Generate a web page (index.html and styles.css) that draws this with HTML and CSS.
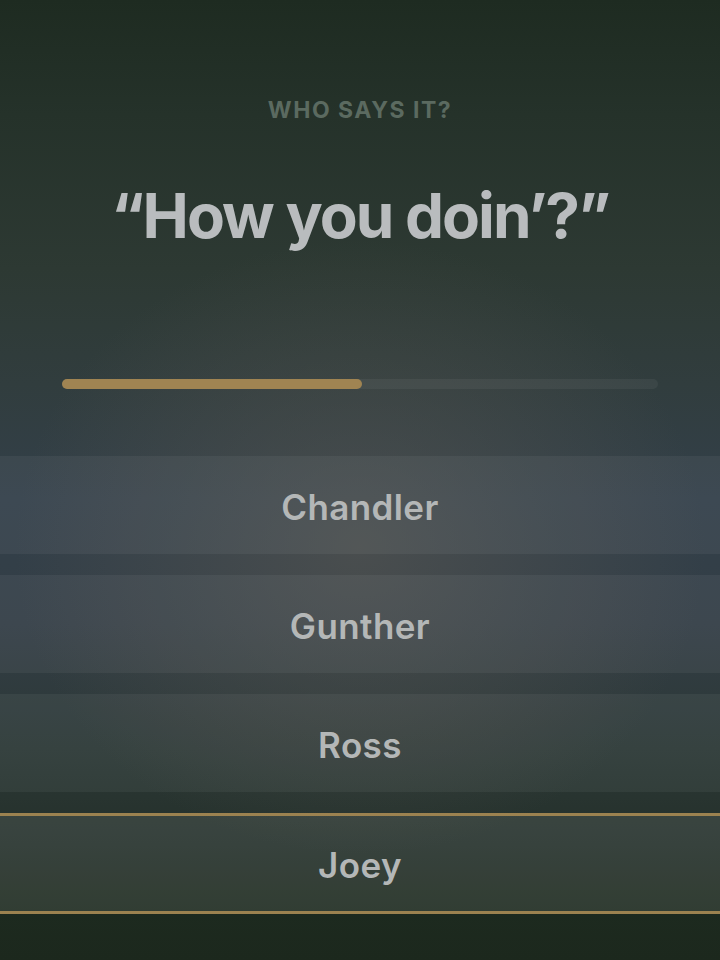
FILE: index.html
```html
<!DOCTYPE html>
<html lang="en">
<head>
<meta charset="utf-8">
<title>Who says it?</title>
<link rel="stylesheet" href="styles.css">
</head>
<body>
<main class="screen">
  <p class="eyebrow">WHO SAYS IT?</p>
  <h1 class="quote">“How you doin’?”</h1>
  <div class="progress"><div class="progress-fill" style="width: 50.3%"></div></div>
  <ul class="options">
    <li class="option">Chandler</li>
    <li class="option">Gunther</li>
    <li class="option">Ross</li>
    <li class="option option-selected">Joey</li>
  </ul>
</main>
</body>
</html>
```

FILE: styles.css
```css
html, body {
  margin: 0;
  padding: 0;
}
body {
  width: 720px;
  height: 960px;
  overflow: hidden;
  font-family: "Inter", "Liberation Sans", sans-serif;
  background:
    radial-gradient(ellipse 48% 32% at 50% 57%, rgba(92, 90, 84, 0.55), rgba(92, 90, 84, 0) 100%),
    linear-gradient(180deg, #1e2b21 0%, #25322a 12%, #2d3933 28%, #313d3e 40%, #33404a 52%, #333e46 65%, #2c3836 78%, #24302a 88%, #1d2a1f 95%, #1c281d 100%);
}
.screen {
  display: flex;
  flex-direction: column;
  align-items: stretch;
  padding-top: 97px;
}
.eyebrow {
  margin: 0;
  text-align: center;
  font-size: 23px;
  line-height: 26px;
  font-weight: 700;
  letter-spacing: 1.5px;
  color: #5b6a60;
}
.quote {
  margin: 58px 0 0;
  text-align: center;
  font-size: 62px;
  line-height: 70px;
  font-weight: 700;
  letter-spacing: -2px;
  color: #b9bcbe;
}
.progress {
  margin: 128px 62px 0;
  height: 10px;
  border-radius: 5px;
  background: rgba(255, 255, 255, 0.05);
  display: flex;
}
.progress-fill {
  height: 100%;
  border-radius: 5px;
  background: #a08452;
}
.options {
  list-style: none;
  margin: 67px 0 0;
  padding: 0;
  display: flex;
  flex-direction: column;
  gap: 21px;
}
.option {
  box-sizing: border-box;
  height: 98px;
  padding-top: 3px;
  display: flex;
  align-items: center;
  justify-content: center;
  background: rgba(255, 255, 255, 0.05);
  font-size: 35px;
  font-weight: 600;
  letter-spacing: 0.4px;
  color: #b4b7b7;
}
.option-selected {
  height: 101px;
  border-top: 3px solid #9c8250;
  border-bottom: 3px solid #9c8250;
  background: rgba(255, 255, 255, 0.09);
}
```
